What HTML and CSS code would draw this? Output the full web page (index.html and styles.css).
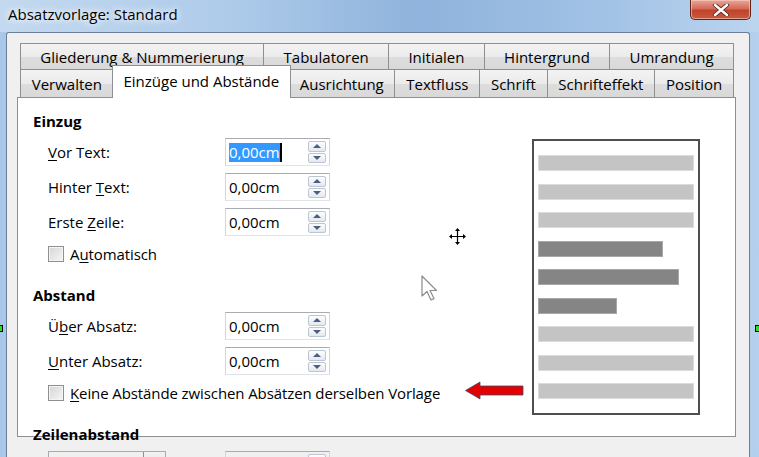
FILE: index.html
```html
<!DOCTYPE html>
<html lang="de">
<head>
    <meta charset="UTF-8">
    <title>Absatzvorlage: Standard</title>
    <link rel="stylesheet" href="styles.css">
</head>
<body>
    <div class="window">
        <div class="titlebar">
            <span class="title">Absatzvorlage: Standard</span>
            <div class="close">
                <svg width="18" height="12" viewBox="0 0 18 12">
                    <path d="M3 1 L15 11 M15 1 L3 11" stroke="#5a2a22" stroke-width="4.2" stroke-linecap="round"/>
                    <path d="M3 1 L15 11 M15 1 L3 11" stroke="#fff" stroke-width="2.4" stroke-linecap="round"/>
                </svg>
            </div>
        </div>

        <div class="frame">
            <div class="tabs">
                <div class="tab-row back">
                    <div class="tab">Gliederung &amp; Nummerierung</div>
                    <div class="tab">Tabulatoren</div>
                    <div class="tab">Initialen</div>
                    <div class="tab">Hintergrund</div>
                    <div class="tab">Umrandung</div>
                </div>
                <div class="tab-row front">
                    <div class="tab">Verwalten</div>
                    <div class="tab active">Einzüge und Abstände</div>
                    <div class="tab">Ausrichtung</div>
                    <div class="tab">Textfluss</div>
                    <div class="tab">Schrift</div>
                    <div class="tab">Schrifteffekt</div>
                    <div class="tab">Position</div>
                </div>
            </div>

            <div class="page">
                <div class="form">
                    <!-- Einzug -->
                    <div class="group-title">Einzug</div>
                    <div class="fields">
                        <div class="field">
                            <span class="label"><u>V</u>or Text:</span>
                            <div class="spin">
                                <span class="value"><span class="sel">0,00cm</span><span class="caret"></span></span>
                                <span class="spin-btns"><span class="up"></span><span class="down"></span></span>
                            </div>
                        </div>
                        <div class="field">
                            <span class="label">Hinter <u>T</u>ext:</span>
                            <div class="spin">
                                <span class="value">0,00cm</span>
                                <span class="spin-btns"><span class="up"></span><span class="down"></span></span>
                            </div>
                        </div>
                        <div class="field">
                            <span class="label">Erste <u>Z</u>eile:</span>
                            <div class="spin">
                                <span class="value">0,00cm</span>
                                <span class="spin-btns"><span class="up"></span><span class="down"></span></span>
                            </div>
                        </div>
                    </div>
                    <div class="check"><span class="box"></span><span>A<u>u</u>tomatisch</span></div>

                    <!-- Abstand -->
                    <div class="group-title next">Abstand</div>
                    <div class="fields">
                        <div class="field">
                            <span class="label">Ü<u>b</u>er Absatz:</span>
                            <div class="spin">
                                <span class="value">0,00cm</span>
                                <span class="spin-btns"><span class="up"></span><span class="down"></span></span>
                            </div>
                        </div>
                        <div class="field">
                            <span class="label"><u>U</u>nter Absatz:</span>
                            <div class="spin">
                                <span class="value">0,00cm</span>
                                <span class="spin-btns"><span class="up"></span><span class="down"></span></span>
                            </div>
                        </div>
                    </div>
                    <div class="check"><span class="box"></span><span><u>K</u>eine Abstände zwischen Absätzen derselben Vorlage</span></div>

                    <!-- Zeilenabstand -->
                    <div class="group-title next">Zeilenabstand</div>
                    <div class="fields">
                        <div class="field">
                            <div class="combo"><span class="combo-text"></span><span class="combo-btn"></span></div>
                            <div class="spin">
                                <span class="value"></span>
                                <span class="spin-btns"><span class="up"></span><span class="down"></span></span>
                            </div>
                        </div>
                    </div>
                </div>

                <div class="preview">
                    <div class="bar"></div>
                    <div class="bar"></div>
                    <div class="bar"></div>
                    <div class="bar dark" style="width: 125px"></div>
                    <div class="bar dark" style="width: 141px"></div>
                    <div class="bar dark" style="width: 79px"></div>
                    <div class="bar"></div>
                    <div class="bar"></div>
                    <div class="bar"></div>
                </div>
            </div>
        </div>

        <!-- Markierungen über dem Screenshot -->
        <svg class="move-cursor" width="17" height="17" viewBox="0 0 17 17">
            <path d="M8.5 1 V16 M1 8.5 H16" stroke="#000" stroke-width="1.2"/>
            <path d="M8.5 0 L6 3 H11 Z M8.5 17 L6 14 H11 Z M0 8.5 L3 6 V11 Z M17 8.5 L14 6 V11 Z" fill="#000"/>
        </svg>
        <svg class="pointer" width="20" height="28" viewBox="0 0 20 28">
            <path d="M1 1 V21 L6 16.5 L10 25 L13 23.6 L9 15.5 H15.5 Z" fill="#fff" stroke="#8a8a8a" stroke-width="1.2" stroke-linejoin="round"/>
        </svg>
        <svg class="red-arrow" width="62" height="20" viewBox="0 0 62 20">
            <path d="M1.5 9.5 L16 1 V5 H59 V14 H16 V18 Z" fill="#e30000" stroke="#3b4a6b" stroke-width="0.8" stroke-linejoin="round"/>
        </svg>
        <div class="handle left"></div>
        <div class="handle right"></div>
    </div>
</body>
</html>
```

FILE: styles.css
```css
body {
    margin: 0;
    font-family: 'Open Sans', 'Noto Sans', sans-serif;
    font-size: 15px;
    color: #000;
}
.window {
    position: relative;
    width: 759px;
    height: 457px;
    overflow: hidden;
    background: linear-gradient(to right, #a9c7e9 0%, #9fc0e6 40%, #86acd9 60%, #9ebfe4 85%, #b4d0ee 100%);
}
.titlebar {
    display: flex;
    height: 32px;
    background: linear-gradient(to right, #c3d9ef 0%, #aecbea 30%, #8fb3dc 55%, #a2c2e6 80%, #bcd5ef 100%);
}
.title {
    padding-left: 8px;
    line-height: 28px;
    text-shadow: 0 0 6px #fff, 0 0 10px #fff;
}
.close {
    margin-left: auto;
    margin-right: 8px;
    width: 61px;
    height: 20px;
    box-sizing: border-box;
    border: 1px solid #5d2219;
    border-top: none;
    border-radius: 0 0 5px 5px;
    background: linear-gradient(to bottom, #e8a898 0%, #d46a57 45%, #c0432c 55%, #c85a3c 100%);
    box-shadow: inset 0 0 0 1px rgba(255, 210, 200, 0.6);
    display: flex;
    align-items: center;
    justify-content: center;
}
.frame {
    margin-left: 6px;
    width: 744px;
    height: 425px;
    box-sizing: border-box;
    border: 1px solid #6c7e95;
    border-bottom: none;
    border-radius: 3px 3px 0 0;
    background-color: #f0f0f0;
    padding: 10px 0 0 10px;
}
.tabs {
    width: 714px;
    margin-left: 3px;
}
.tab-row {
    display: flex;
    height: 26px;
}
.tab-row.front {
    height: 28px;
}
.tab {
    flex: 1 1 auto;
    display: flex;
    align-items: center;
    justify-content: center;
    white-space: nowrap;
    border: 1px solid #8d8f93;
    border-bottom: none;
    margin-left: -1px;
    background: linear-gradient(to bottom, #f3f3f3 0%, #ebebeb 50%, #dddddd 51%, #d9d9d9 100%);
}
.tab:first-child {
    margin-left: 0;
}
.tab.active {
    position: relative;
    z-index: 1;
    margin: -4px -2px -1px -2px;
    background: #fff;
    padding-bottom: 2px;
}
.page {
    display: flex;
    width: 719px;
    height: 340px;
    box-sizing: border-box;
    border: 1px solid #8d8f93;
    background-color: #fff;
    padding: 12px 0 0 15px;
}
.form {
    width: 297px;
    flex-shrink: 0;
}
.group-title {
    font-weight: bold;
    height: 22px;
    line-height: 22px;
}
.group-title.next {
    margin-top: 21px;
}
.fields {
    display: flex;
    flex-direction: column;
    gap: 7px;
    margin-top: 6px;
}
.field {
    display: flex;
    align-items: center;
    height: 28px;
    padding-left: 15px;
}
.label {
    width: 177px;
    flex-shrink: 0;
}
u {
    text-decoration-thickness: 1px;
    text-underline-offset: 2px;
}
.spin {
    display: flex;
    width: 105px;
    height: 28px;
    box-sizing: border-box;
    border: 1px solid;
    border-color: #a9abb2 #d3d6dc #e0e3e8 #d3d6dc;
    padding: 1px 3px 1px 2px;
}
.value {
    flex: 1;
    display: flex;
    align-items: center;
    padding-left: 1px;
}
.sel {
    background-color: #3399ff;
    color: #fff;
    line-height: 19px;
}
.caret {
    width: 2px;
    height: 19px;
    background-color: #000;
}
.spin-btns {
    display: flex;
    flex-direction: column;
    width: 18px;
    gap: 1px;
    padding: 1px 0;
}
.spin-btns span {
    flex: 1;
    display: flex;
    align-items: center;
    justify-content: center;
    border: 1px solid #bcc6d2;
    border-radius: 2px;
    background: linear-gradient(to bottom, #fdfdfe, #e4e9f0);
}
.up::after {
    content: "";
    border-left: 4px solid transparent;
    border-right: 4px solid transparent;
    border-bottom: 4px solid #4c5f80;
}
.down::after {
    content: "";
    border-left: 4px solid transparent;
    border-right: 4px solid transparent;
    border-top: 4px solid #4c5f80;
}
.check {
    display: flex;
    align-items: center;
    gap: 6px;
    height: 18px;
    margin-top: 9px;
    padding-left: 15px;
    white-space: nowrap;
    letter-spacing: -0.1px;
}
.box {
    flex-shrink: 0;
    width: 16px;
    height: 16px;
    box-sizing: border-box;
    border: 1px solid #8e8f8f;
    background: linear-gradient(to bottom right, #d5d5d5, #f6f6f6);
    box-shadow: inset 0 0 0 1px #f4f4f4;
}
.combo {
    display: flex;
    width: 118px;
    height: 28px;
    box-sizing: border-box;
    border: 1px solid #a9abb2;
    margin-right: 59px;
}
.combo-text {
    flex: 1;
}
.combo-btn {
    width: 21px;
    border-left: 1px solid #8e8f8f;
    background: linear-gradient(to bottom, #f2f2f2, #dcdcdc);
}
.preview {
    display: flex;
    flex-direction: column;
    gap: 12.5px;
    margin: 29px 0 0 202px;
    width: 168px;
    height: 276px;
    box-sizing: border-box;
    border: 2px solid #4e4e4e;
    padding: 14px 4px 0 4px;
}
.bar {
    width: 156px;
    height: 16px;
    box-sizing: border-box;
    background-color: #c4c4c4;
    border: 1px solid #dcdcdc;
}
.bar.dark {
    background-color: #858585;
    border-color: #a8a8a8;
}
.move-cursor {
    position: absolute;
    left: 449px;
    top: 228px;
}
.pointer {
    position: absolute;
    left: 421px;
    top: 275px;
}
.red-arrow {
    position: absolute;
    left: 464px;
    top: 381px;
}
.handle {
    position: absolute;
    top: 325px;
    width: 6px;
    height: 7px;
    box-sizing: border-box;
    background-color: #28e028;
    border: 1px solid #000;
}
.handle.left {
    left: -3px;
}
.handle.right {
    left: 755px;
}
```
